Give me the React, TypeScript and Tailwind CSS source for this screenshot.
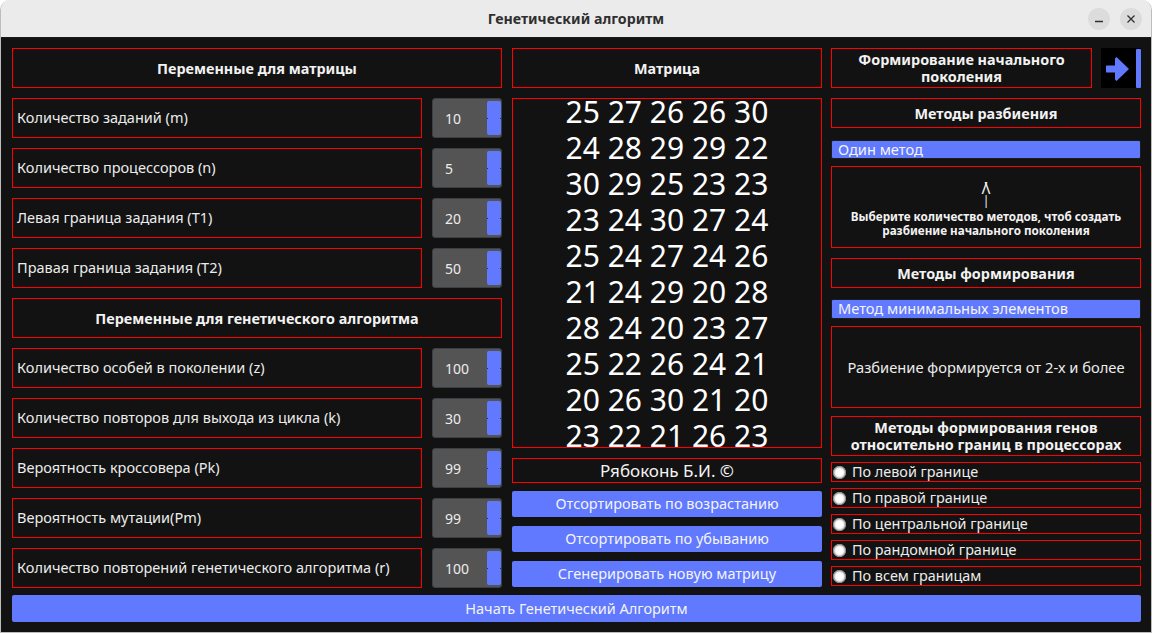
import React from "react";

const font = { fontFamily: '"Noto Sans", "Open Sans", sans-serif' };

const matrix = [
  "25 27 26 26 30",
  "24 28 29 29 22",
  "30 29 25 23 23",
  "23 24 30 27 24",
  "25 24 27 24 26",
  "21 24 29 20 28",
  "28 24 20 23 27",
  "25 22 26 24 21",
  "20 26 30 21 20",
  "23 22 21 26 23",
];

function Header({ children, h = "h-[40px]" }: { children: React.ReactNode; h?: string }) {
  return (
    <div className={`${h} border border-[#ff0000] flex items-center justify-center text-center font-bold text-[14.4px] leading-[17px] text-[#f2f2f2]`}>
      {children}
    </div>
  );
}

function Spin({ value }: { value: string }) {
  return (
    <div className="relative w-[70px] h-[40px] rounded-[3px] bg-[#545454] border border-[#3b3f46] flex items-center">
      <span className="pl-[12px] text-[14px] text-[#ececec]">{value}</span>
      <div className="absolute right-0 top-[2px] bottom-[2px] w-[14px] rounded-[2px] bg-[#6079ff]" />
      <div className="absolute right-[13px] top-[19px] w-[1px] h-[1px] bg-[#333]" />
      <div className="absolute right-0 top-[19px] w-[1px] h-[1px] bg-[#333]" />
    </div>
  );
}

function Row({ label, value }: { label: string; value: string }) {
  return (
    <div className="flex gap-[10px] h-[40px]">
      <div className="w-[410px] border border-[#ff0000] flex items-center pl-[4px] text-[14.5px] text-[#ececec]">
        {label}
      </div>
      <Spin value={value} />
    </div>
  );
}

function Btn({ children }: { children: React.ReactNode }) {
  return (
    <div className="h-[26px] rounded-[2px] bg-[#6079ff] flex items-center justify-center text-[14.5px] text-[#f4f4f4]">
      {children}
    </div>
  );
}

function Radio({ label }: { label: string }) {
  return (
    <div className="h-[20px] border border-[#ff0000] flex items-center">
      <span className="ml-[1px] w-[13px] h-[13px] rounded-full bg-white shadow-[inset_0_0_2px_1px_#6a6a6a]" />
      <span className="ml-[6px] text-[14.4px] text-[#ececec] leading-none">{label}</span>
    </div>
  );
}

function Combo({ label, h }: { label: string; h: string }) {
  return (
    <div className={`${h} rounded-[2px] bg-[#6079ff] border border-[#1c1c1c] flex items-center pl-[6px] text-[14.6px] text-[#f4f4f4]`}>
      {label}
    </div>
  );
}

export default function App() {
  return (
    <div className="w-[1152px] h-[633px] bg-white overflow-hidden" style={font}>
      <div className="w-full h-full flex flex-col rounded-t-[10px] overflow-hidden border-x border-b border-[#bdbdbd]">
        {/* title bar */}
        <div className="relative h-[38px] shrink-0 bg-[#ebebeb] border-b border-[#1a1a1a] flex items-center justify-center">
          <span className="font-bold text-[14.2px] text-[#2f2f2f]">Генетический алгоритм</span>
          <div className="absolute right-[9px] top-[8px] flex gap-[10px]">
            <div className="w-[22px] h-[22px] rounded-full bg-[#dcdcdc] flex items-center justify-center">
              <svg width="10" height="10" viewBox="0 0 10 10">
                <line x1="1" y1="7.5" x2="9" y2="7.5" stroke="#2f2f2f" strokeWidth="1.3" />
              </svg>
            </div>
            <div className="w-[22px] h-[22px] rounded-full bg-[#dcdcdc] flex items-center justify-center">
              <svg width="10" height="10" viewBox="0 0 10 10">
                <path d="M1.5 1.5 L8.5 8.5 M8.5 1.5 L1.5 8.5" stroke="#2f2f2f" strokeWidth="1.3" />
              </svg>
            </div>
          </div>
        </div>

        {/* body */}
        <div className="flex-1 bg-[#121212] pl-[11px] pr-[10px] pt-[10px] pb-[10px] flex flex-col">
          <div className="flex gap-[10px] h-[540px]">
            {/* left column */}
            <div className="w-[490px] flex flex-col gap-[10px]">
              <Header>Переменные для матрицы</Header>
              <Row label="Количество заданий (m)" value="10" />
              <Row label="Количество процессоров (n)" value="5" />
              <Row label="Левая граница задания (T1)" value="20" />
              <Row label="Правая граница задания (T2)" value="50" />
              <Header>Переменные для генетического алгоритма</Header>
              <Row label="Количество особей в поколении (z)" value="100" />
              <Row label="Количество повторов для выхода из цикла (k)" value="30" />
              <Row label="Вероятность кроссовера (Pk)" value="99" />
              <Row label="Вероятность мутации(Pm)" value="99" />
              <Row label="Количество повторений генетического алгоритма (r)" value="100" />
            </div>

            {/* middle column */}
            <div className="w-[310px] flex flex-col">
              <Header>Матрица</Header>
              <div className="mt-[10px] h-[350px] border border-[#ff0000] overflow-hidden">
                <div className="-mt-[5px] flex flex-col items-center">
                  {matrix.map((r, i) => (
                    <div key={i} className="h-[36px] leading-[36px] text-[30px] text-white whitespace-pre">
                      {r}
                    </div>
                  ))}
                </div>
              </div>
              <div className="mt-[10px] h-[25px] border border-[#ff0000] flex items-center justify-center text-[17px] text-[#f2f2f2]">
                Рябоконь Б.И. ©
              </div>
              <div className="mt-[8px] flex flex-col gap-[9px]">
                <Btn>Отсортировать по возрастанию</Btn>
                <Btn>Отсортировать по убыванию</Btn>
                <Btn>Сгенерировать новую матрицу</Btn>
              </div>
            </div>

            {/* right column */}
            <div className="ml-[-1px] w-[310px] flex flex-col">
              <div className="flex gap-[9px] h-[40px]">
                <div className="w-[261px] border border-[#ff0000] flex items-center justify-center text-center font-bold text-[14.4px] leading-[17px] text-[#f2f2f2]">
                  Формирование начального
                  <br />
                  поколения
                </div>
                <div className="relative w-[40px] h-[40px] bg-black">
                  <svg width="40" height="40" viewBox="0 0 40 40" className="absolute left-0 top-0">
                    <polygon
                      points="5.5,17.5 14,17.5 14,10.5 15.5,9 28,21 15.5,33 14,31.5 14,24.5 5.5,24.5 5,24 5,18"
                      fill="#6079ff"
                    />
                    <rect x="35" y="1" width="5" height="39" rx="1" fill="#6079ff" />
                  </svg>
                </div>
              </div>
              <div className="mt-[10px]">
                <Header h="h-[30px]">Методы разбиения</Header>
              </div>
              <div className="mt-[12px]">
                <Combo label="Один метод" h="h-[19px]" />
              </div>
              <div className="mt-[7px] h-[82px] border border-[#ff0000] flex flex-col items-center justify-center text-[#f2f2f2]">
                <div className="text-[16px] leading-[13px] tracking-[-3px] mt-[4px] pr-[3px] whitespace-pre">{"/\\"}</div>
                <div className="text-[12px] leading-[12px]">|</div>
                <div className="font-bold text-[11.7px] leading-[14px] text-center mt-[2px]">
                  Выберите количество методов, чтоб создать
                  <br />
                  разбиение начального поколения
                </div>
              </div>
              <div className="mt-[10px]">
                <Header h="h-[30px]">Методы формирования</Header>
              </div>
              <div className="mt-[11px]">
                <Combo label="Метод минимальных элементов" h="h-[20px]" />
              </div>
              <div className="mt-[7px] h-[82px] border border-[#ff0000] flex items-center justify-center text-[14.7px] text-[#ececec]">
                Разбиение формируется от 2-х и более
              </div>
              <div className="mt-[8px]">
                <Header h="h-[40px]">
                  Методы формирования генов
                  <br />
                  относительно границ в процессорах
                </Header>
              </div>
              <div className="mt-[6px] flex flex-col gap-[6px]">
                <Radio label="По левой границе" />
                <Radio label="По правой границе" />
                <Radio label="По центральной границе" />
                <Radio label="По рандомной границе" />
                <Radio label="По всем границам" />
              </div>
            </div>
          </div>
          <div className="mt-[7px] h-[27px] rounded-[2px] bg-[#6079ff] flex items-center justify-center text-[14.5px] text-[#f4f4f4]">
            Начать Генетический Алгоритм
          </div>
        </div>
      </div>
    </div>
  );
}
